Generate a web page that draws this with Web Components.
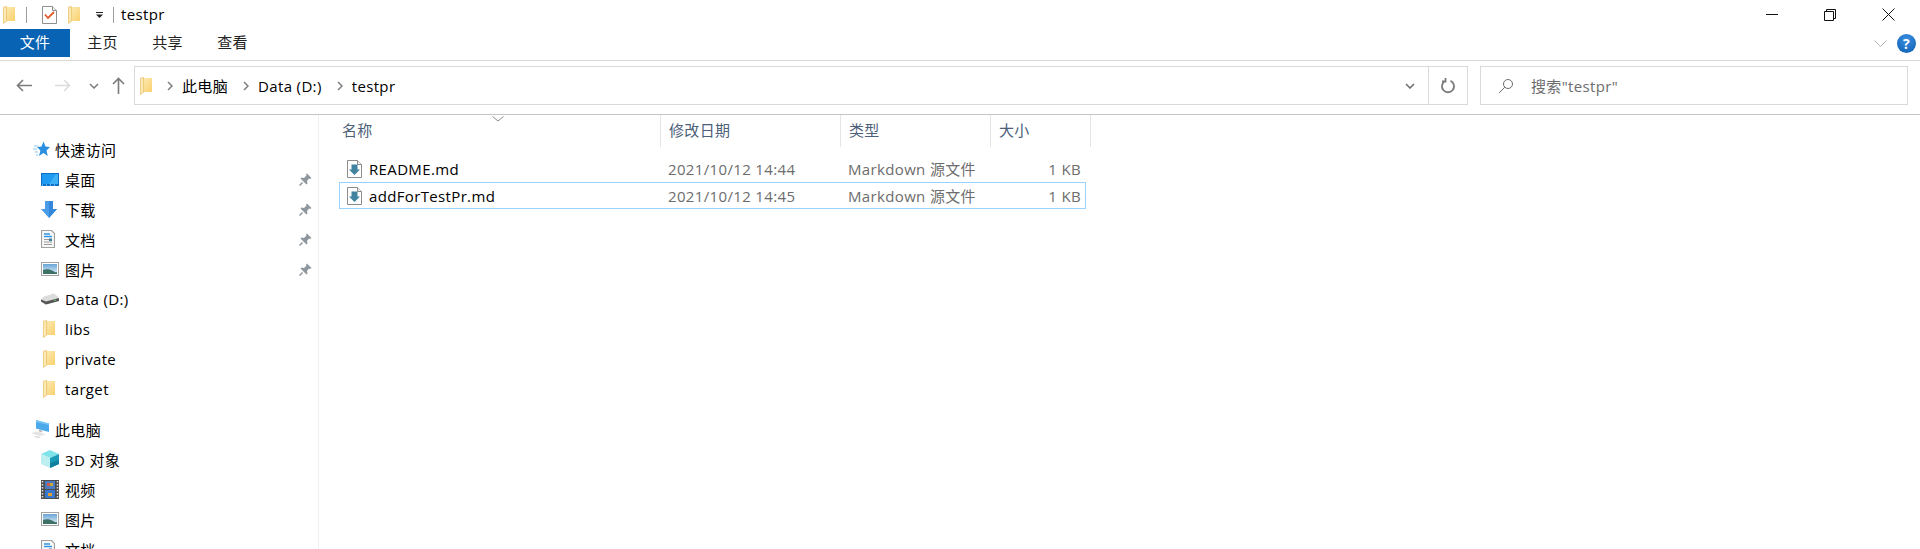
<!DOCTYPE html>
<html lang="zh">
<head>
<meta charset="utf-8">
<title>testpr</title>
<style>
  html, body { margin: 0; height: 100%; background: #fff; overflow: hidden; }
  body { font: 15px "Open Sans", "Noto Sans CJK SC", sans-serif; letter-spacing: .35px; color: #000; }
</style>
</head>
<body>
<explorer-window>
  <title-bar>testpr</title-bar>
  <ribbon-tabs>
    <ribbon-tab active>文件</ribbon-tab>
    <ribbon-tab>主页</ribbon-tab>
    <ribbon-tab>共享</ribbon-tab>
    <ribbon-tab>查看</ribbon-tab>
  </ribbon-tabs>
  <address-row path="此电脑|Data (D:)|testpr" search='搜索"testpr"'></address-row>
  <explorer-body>
    <nav-pane slot="nav">
      <nav-item group icon="star">快速访问</nav-item>
      <nav-item icon="desktop" pinned>桌面</nav-item>
      <nav-item icon="download" pinned>下载</nav-item>
      <nav-item icon="docs" pinned>文档</nav-item>
      <nav-item icon="pictures" pinned>图片</nav-item>
      <nav-item icon="drive">Data (D:)</nav-item>
      <nav-item icon="folder">libs</nav-item>
      <nav-item icon="folder">private</nav-item>
      <nav-item icon="folder">target</nav-item>
      <nav-item group spaced icon="pc">此电脑</nav-item>
      <nav-item icon="cube">3D 对象</nav-item>
      <nav-item icon="video">视频</nav-item>
      <nav-item icon="pictures">图片</nav-item>
      <nav-item icon="docs">文档</nav-item>
    </nav-pane>
    <file-list>
      <file-row name="README.md" date="2021/10/12 14:44" type="Markdown 源文件" size="1 KB"></file-row>
      <file-row selected name="addForTestPr.md" date="2021/10/12 14:45" type="Markdown 源文件" size="1 KB"></file-row>
    </file-list>
  </explorer-body>
</explorer-window>

<script>
// all the little explorer icons, drawn by hand. [width, height, markup]
const ICONS = {
  folder: [12, 18, `
    <defs><linearGradient id="fg" x1="0" y1="0" x2="1" y2="1"><stop offset="0" stop-color="#fdebb6"/><stop offset="1" stop-color="#f9d06c"/></linearGradient></defs>
    <rect x="3" y="1" width="9" height="14" fill="url(#fg)"/>
    <path d="M.4 1.200 3.600.6v14.600l-3.200 2.200z" fill="#fce9b4" stroke="#e8c068" stroke-width=".8"/>`],
  check: [15, 18, `
    <path d="M.5.5h10l4 4v13H.5z" fill="#fff" stroke="#8f8f8f"/>
    <path d="M10.5.5v4h4" fill="#eee" stroke="#8f8f8f"/>
    <path d="M3 8.500l3 3.500 6-6" fill="none" stroke="#e0592a" stroke-width="1.800"/>`],
  star: [17, 16, `
    <path d="M10.500.5l2 5.100 4.500.4-3.500 3.400 1.300 5.600-4.300-3-4.500 3 1.400-5.600L4 6l4.500-.4z" fill="#2b8fe0"/>
    <path d="M1 5h4M0 8h4M2 11h3M3 14h2" stroke="#8cc8f2"/>`],
  desktop: [18, 13, `
    <rect width="18" height="13" fill="#0a70c8"/>
    <rect x="1" y="1" width="16" height="10" fill="#1e9af0"/>
    <path d="M8 11l7-10h2v10z" fill="#3fb0f6"/>
    <path d="M1 12h16" stroke="#bfe2fa" stroke-dasharray="1 3"/>`],
  download: [16, 17, `
    <path d="M4 0h8v8h4l-8 9-8-9h4z" fill="#4a9ce8"/>
    <path d="M8 0h4v8h4l-8 9z" fill="#3488dc"/>`],
  docs: [14, 18, `
    <path d="M.5.500h10l3 3v14H.5z" fill="#f8f8f8" stroke="#a0a0a0" stroke-width="1.200"/>
    <path d="M3 4h6M3 6.500h8" stroke="#2f95e4" stroke-width="1.300"/>
    <path d="M3 9.500h8M3 12h8M3 14.500h8" stroke="#9a9a9a"/>
    <path d="M8 8.500h3v2.500H8z" fill="#3d7f9c"/>`],
  pictures: [18, 14, `
    <defs><linearGradient id="sky" x1="0" y1="0" x2="0" y2="1"><stop offset="0" stop-color="#6aa4d8"/><stop offset="1" stop-color="#dff0f6"/></linearGradient></defs>
    <rect x=".5" y=".5" width="17" height="13" fill="#fff" stroke="#a3a3a3"/>
    <rect x="2" y="2" width="14" height="10" fill="url(#sky)"/>
    <path d="M2 8c3-1.500 7-1 10 1s3 1 4 1v2H2z" fill="#3e7166"/>`],
  drive: [18, 12, `
    <path d="M3 3.500 13 .5l5 4-1 .5v3L4 11.500 0 8.500V6z" fill="#dcdcdc"/>
    <path d="M0 6.500l5 2 13-3.500v3L5 11.500l-5-3z" fill="#555"/>
    <path d="M13 7.500l2-.5" stroke="#5fc26a"/>`],
  pc: [20, 18, `
    <path d="M1 13l9 3 6-1.500-9-3z" fill="#e4e4e4"/>
    <path d="M4 17l5 1 2-1-5-1z" fill="#d4d4d4"/>
    <path d="M6 0l13 3.500V12L6 8.500z" fill="#4aa9ea"/>
    <path d="M6 0l13 3.500V5L6 2z" fill="#7cc6f4"/>
    <path d="M9 9.500v2l3 1v-2z" fill="#bbb"/>`],
  cube: [18, 18, `
    <path d="M9 0l9 4-9 4-9-4z" fill="#7fe3ea"/>
    <path d="M0 4l9 4v10L0 14z" fill="#bdeef0"/>
    <path d="M18 4L9 8v10l9-4z" fill="#1a9bb8"/>
    <path d="M9 13l9-3v4l-9 4z" fill="#117f9e"/>`],
  video: [18, 19, `
    <rect width="18" height="19" fill="#4c4c4c"/>
    <path d="M1.500 1v17M16.500 1v17" stroke="#ddd" stroke-width="1.500" stroke-dasharray="1.500 1.500"/>
    <rect x="4" y="1" width="10" height="8" fill="#4a7cc4"/>
    <rect x="4" y="10" width="10" height="8" fill="#3a78d0"/>
    <path d="M6 3h3v3H6z" fill="#d2584a"/><path d="M9 3h3v3H9z" fill="#c8a83e"/>
    <path d="M7 13h4v3H7z" fill="#e0a030"/>`],
  md: [15, 18, `
    <path d="M.5.500h10l4 4v13H.5z" fill="#fff" stroke="#8c8c8c"/>
    <path d="M10.500.500v4h4" fill="#eee" stroke="#8c8c8c"/>
    <path d="M4.500 4.500h6v5H13L7.500 15 2 9.500h2.500z" fill="#41829f"/>`],
  pin: [13, 13, `
    <path d="M8 .5l4.500 4.500-1.500 1-1-.5L8 8l.5 2.500-1 1-6-6 1-1L5 5l2.500-2.500-.5-1z" fill="#8f979e"/>
    <path d="M3.500 9.500L.5 12.500" stroke="#8f979e" stroke-width="1.500"/>`]
};

class AppIcon extends HTMLElement {
  connectedCallback() {
    const [w, h, body] = ICONS[this.getAttribute("name")];
    // ids inside a shadow root stay local so the gradients don't clash
    this.attachShadow({ mode: "open" }).innerHTML = `
      <style>:host { display: block; flex: none; width: ${w}px; height: ${h}px; } svg { display: block; }</style>
      <svg width="${w}" height="${h}" viewBox="0 0 ${w} ${h}">${body}</svg>`;
  }
}
customElements.define("app-icon", AppIcon);

class ExplorerWindow extends HTMLElement {
  constructor() {
    super();
    this.attachShadow({ mode: "open" }).innerHTML = `
      <style>:host { display: flex; flex-direction: column; height: 100vh; overflow: hidden; }</style>
      <slot></slot>`;
  }
}
customElements.define("explorer-window", ExplorerWindow);

class TitleBar extends HTMLElement {
  constructor() {
    super();
    this.attachShadow({ mode: "open" }).innerHTML = `
      <style>
        :host { display: flex; align-items: center; flex: none; height: 29px; }
        .sep { width: 1px; height: 16px; background: #9e9e9e; flex: none; }
        .title { margin-left: 7px; line-height: 29px; }
        .drop { margin: 0 9px 0 16px; flex: none; }
        .controls { margin-left: auto; display: flex; padding-right: 3px; }
        .controls div { width: 58px; height: 29px; display: flex; align-items: center; justify-content: center; }
      </style>
      <app-icon name="folder" style="margin-left:3px"></app-icon>
      <div class="sep" style="margin:0 15px 0 11px"></div>
      <app-icon name="check"></app-icon>
      <app-icon name="folder" style="margin-left:11px"></app-icon>
      <svg class="drop" width="8" height="6" viewBox="0 0 8 6"><path d="M0 0h7v1H0z" fill="#222"/><path d="M0 2.500h7L3.500 6z" fill="#222"/></svg>
      <div class="sep"></div>
      <span class="title"><slot></slot></span>
      <div class="controls">
        <div><svg width="12" height="12" viewBox="0 0 12 12"><path d="M0 5.500h12" stroke="#111"/></svg></div>
        <div><svg width="12" height="12" viewBox="0 0 12 12"><path d="M.5 2.500h9v9h-9zM2.500 2.500v-2h9v9h-2" fill="none" stroke="#111"/></svg></div>
        <div><svg width="13" height="13" viewBox="0 0 13 13"><path d="M.5.500l12 12M12.500.500l-12 12" stroke="#111"/></svg></div>
      </div>`;
  }
}
customElements.define("title-bar", TitleBar);

class RibbonTabs extends HTMLElement {
  constructor() {
    super();
    this.attachShadow({ mode: "open" }).innerHTML = `
      <style>
        :host { display: flex; flex: none; height: 32px; box-sizing: border-box; border-bottom: 1px solid #dadbdc; align-items: flex-start; }
        .right { margin-left: auto; display: flex; align-items: center; gap: 10px; height: 28px; padding-right: 4px; }
        .help { width: 19px; height: 19px; border-radius: 50%; background: radial-gradient(circle at 50% 30%, #3b8fe0, #0b5cb0); color: #fff; font: bold 14px/19px "Open Sans", sans-serif; text-align: center; }
      </style>
      <slot></slot>
      <div class="right">
        <svg width="13" height="7" viewBox="0 0 13 7"><path d="M.5.500l6 6 6-6" fill="none" stroke="#b5b5b5"/></svg>
        <div class="help">?</div>
      </div>`;
  }
}
customElements.define("ribbon-tabs", RibbonTabs);

class RibbonTab extends HTMLElement {
  constructor() {
    super();
    this.attachShadow({ mode: "open" }).innerHTML = `
      <style>
        :host { display: block; width: 65px; height: 28px; line-height: 27px; text-align: center; color: #222; }
        :host(:first-child) { width: 70px; }
        :host([active]) { background: #0863b4; color: #fff; }
      </style>
      <slot></slot>`;
  }
}
customElements.define("ribbon-tab", RibbonTab);

class AddressRow extends HTMLElement {
  connectedCallback() {
    const chev = `<svg class="chev" width="6" height="10" viewBox="0 0 6 10"><path d="M1 1l4 4-4 4" fill="none" stroke="#7d7d7d" stroke-width="1.500"/></svg>`;
    const crumbs = this.getAttribute("path").split("|").map(p => `${chev}<span>${p}</span>`).join("");
    this.attachShadow({ mode: "open" }).innerHTML = `
      <style>
        :host { display: flex; flex: none; height: 54px; box-sizing: border-box; border-bottom: 1px solid #c4c4c4; padding-top: 5px; align-items: flex-start; }
        .nav { width: 134px; height: 39px; flex: none; display: flex; align-items: center; }
        .box { height: 39px; box-sizing: border-box; border: 1px solid #d9d9d9; display: flex; align-items: center; }
        .addr { width: 1334px; flex: none; padding-left: 5px; }
        .chev { margin: 0 9px 0 15px; flex: none; }
        .crumbs { display: flex; align-items: center; flex: 1; }
        .dd { flex: none; width: 37px; display: flex; justify-content: center; }
        .refresh { flex: none; width: 38px; height: 37px; border-left: 1px solid #d9d9d9; display: flex; align-items: center; justify-content: center; }
        .search { width: 428px; margin-left: 12px; flex: none; color: #6d6d6d; padding-left: 17px; }
        .search span { margin-left: 17px; }
      </style>
      <div class="nav">
        <svg style="margin-left:16px" width="16" height="13" viewBox="0 0 16 13"><path d="M16 6.500H1.500M7 1L1.500 6.500 7 12" fill="none" stroke="#7b7b7b" stroke-width="1.600"/></svg>
        <svg style="margin-left:23px" width="16" height="13" viewBox="0 0 16 13"><path d="M0 6.500h14.500M9 1l5.500 5.500L9 12" fill="none" stroke="#dcdcdc" stroke-width="1.600"/></svg>
        <svg style="margin-left:18px" width="10" height="6" viewBox="0 0 10 6"><path d="M1 1l4 4 4-4" fill="none" stroke="#7b7b7b" stroke-width="1.500"/></svg>
        <svg style="margin-left:13px" width="13" height="17" viewBox="0 0 13 17"><path d="M6.500 17V1.500M1 7l5.500-5.500L12 7" fill="none" stroke="#7b7b7b" stroke-width="1.600"/></svg>
      </div>
      <div class="box addr">
        <app-icon name="folder"></app-icon>
        <div class="crumbs">${crumbs}</div>
        <div class="dd"><svg width="10" height="6" viewBox="0 0 10 6"><path d="M1 1l4 4 4-4" fill="none" stroke="#6b6b6b" stroke-width="1.500"/></svg></div>
        <div class="refresh"><svg width="14" height="16" viewBox="0 0 14 16"><path d="M9.500 2.800A6 6 0 1 1 4.500 2.800M4.500 0v3.500H1" fill="none" stroke="#7b7b7b" stroke-width="1.800"/></svg></div>
      </div>
      <div class="box search">
        <svg width="16" height="16" viewBox="0 0 16 16"><circle cx="10" cy="6" r="4.500" fill="none" stroke="#6d6d6d"/><path d="M6.800 9.200L1 15" stroke="#6d6d6d"/></svg>
        <span>${this.getAttribute("search").replace(/"/g, "&quot;")}</span>
      </div>`;
  }
}
customElements.define("address-row", AddressRow);

class ExplorerBody extends HTMLElement {
  constructor() {
    super();
    this.attachShadow({ mode: "open" }).innerHTML = `
      <style>
        :host { display: flex; flex: 1; min-height: 0; }
      </style>
      <slot name="nav"></slot>
      <slot></slot>`;
  }
}
customElements.define("explorer-body", ExplorerBody);

class NavPane extends HTMLElement {
  constructor() {
    super();
    this.attachShadow({ mode: "open" }).innerHTML = `
      <style>
        :host { display: block; flex: none; width: 318px; border-right: 1px solid #f0f0f0; padding-top: 19px; overflow: hidden; }
      </style>
      <slot></slot>`;
  }
}
customElements.define("nav-pane", NavPane);

class NavItem extends HTMLElement {
  connectedCallback() {
    const pin = this.hasAttribute("pinned") ? `<app-icon class="pin" name="pin"></app-icon>` : "";
    this.attachShadow({ mode: "open" }).innerHTML = `
      <style>
        :host { display: flex; align-items: center; height: 30px; padding-left: 41px; white-space: nowrap; }
        :host([group]) { padding-left: 33px; }
        :host([spaced]) { margin-top: 10px; padding-left: 30px; }
        .ic { width: 24px; flex: none; display: flex; align-items: center; justify-content: flex-start; }
        :host([group]) .ic { width: 22px; }
        :host([spaced]) .ic { width: 25px; }
        .folder { padding-left: 2px; width: 22px; }
        .pin { margin-left: auto; margin-right: 6px; }
      </style>
      <div class="ic ${this.getAttribute("icon") === "folder" ? "folder" : ""}"><app-icon name="${this.getAttribute("icon")}"></app-icon></div>
      <slot></slot>
      ${pin}`;
  }
}
customElements.define("nav-item", NavItem);

class FileList extends HTMLElement {
  constructor() {
    super();
    this.attachShadow({ mode: "open" }).innerHTML = `
      <style>
        :host { display: block; flex: 1; position: relative; }
        .head { display: grid; grid-template-columns: 342px 180px 150px 100px; height: 32px; color: #4c607a; }
        .head div { border-right: 1px solid #e5e5e5; padding-left: 8px; line-height: 31px; box-sizing: border-box; }
        .head div:first-child { padding-left: 23px; }
        .sort { position: absolute; left: 173px; top: 1px; }
        .rows { padding: 8px 0 0 20px; }
      </style>
      <svg class="sort" width="12" height="6" viewBox="0 0 12 6"><path d="M.5.500l5.500 4.500 5.500-4.500" fill="none" stroke="#8c8c8c"/></svg>
      <div class="head"><div>名称</div><div>修改日期</div><div>类型</div><div>大小</div></div>
      <div class="rows"><slot></slot></div>`;
  }
}
customElements.define("file-list", FileList);

class FileRow extends HTMLElement {
  connectedCallback() {
    const a = n => this.getAttribute(n);
    this.attachShadow({ mode: "open" }).innerHTML = `
      <style>
        :host { display: grid; grid-template-columns: 320px 180px 150px 95px; width: 747px; height: 27px; box-sizing: border-box; border: 1px solid transparent; align-items: center; white-space: nowrap; color: #6d6d6d; }
        :host([selected]) { border-color: #99d1ff; }
        .name { display: flex; align-items: center; gap: 7px; padding-left: 7px; color: #000; }
        .c { padding-left: 8px; }
        .size { text-align: right; padding-right: 4px; }
      </style>
      <div class="name"><app-icon name="md"></app-icon><span>${a("name")}</span></div>
      <div class="c">${a("date")}</div>
      <div class="c">${a("type")}</div>
      <div class="size">${a("size")}</div>`;
  }
}
customElements.define("file-row", FileRow);
</script>
</body>
</html>
